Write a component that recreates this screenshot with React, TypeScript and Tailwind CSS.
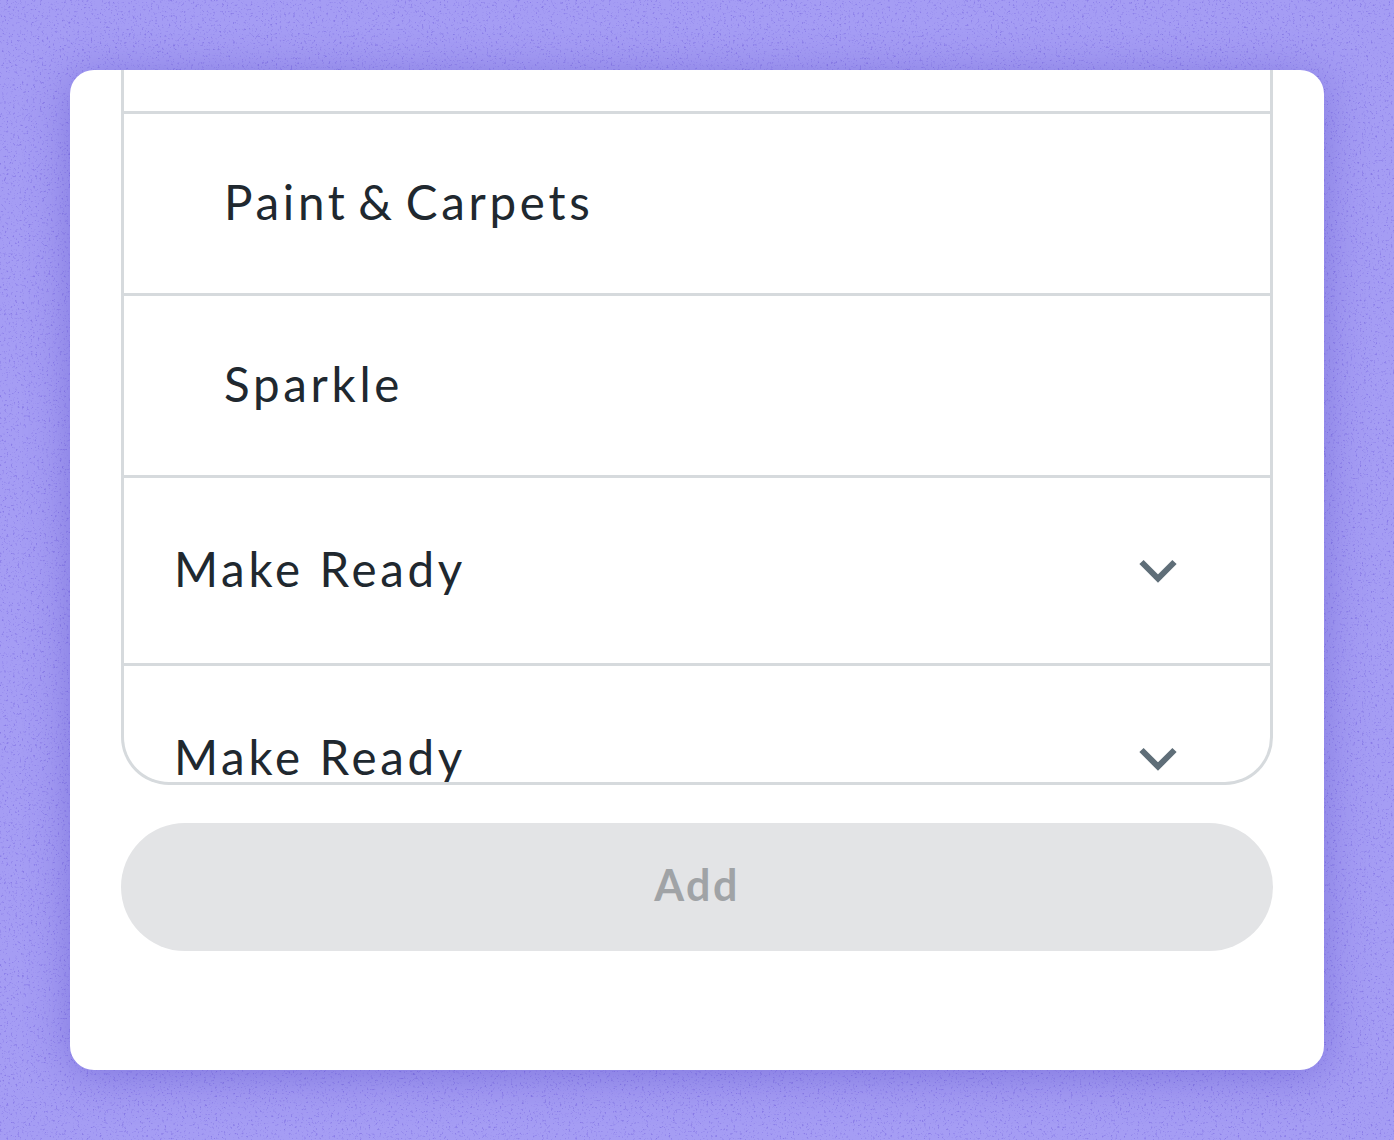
const font = "font-['Lato','Liberation_Sans',sans-serif]";

function Chevron() {
  return (
    <svg width="38" height="24" viewBox="0 0 38 24" fill="none" className="shrink-0">
      <path d="M2.5 3 L19 19.5 L35.5 3" stroke="#5f6e78" strokeWidth="6" />
    </svg>
  );
}

function Row({ label, child, last }: { label: string; child?: boolean; last?: boolean }) {
  return (
    <div
      className={`flex shrink-0 items-center justify-between border-b-[3px] border-[#d6dadd] pr-[93px] text-[47.5px] tracking-[0.078em] text-[#20282f] ${
        child ? "h-[182px] pl-[100px] [word-spacing:-6px]" : "h-[188px] pl-[50px]"
      } ${last ? "border-b-0" : ""}`}
    >
      <span className="mb-[4px]">{label}</span>
      {!child && <Chevron />}
    </div>
  );
}

export default function App() {
  return (
    <div className={`relative min-h-[1140px] overflow-hidden bg-[#a59df4] p-[70px] ${font}`}>
      <svg className="absolute inset-0 h-full w-full" aria-hidden="true">
        <filter id="grain">
          <feTurbulence type="fractalNoise" baseFrequency="0.45" numOctaves="4" seed="4" />
          <feColorMatrix values="0 0 0 0 0.25  0 0 0 0 0.2  0 0 0 0 0.8  4 0 0 0 -2.35" />
        </filter>
        <rect width="100%" height="100%" filter="url(#grain)" />
      </svg>

      <div className="relative flex h-[1000px] flex-col rounded-[24px] bg-white px-[51px] shadow-[0_6px_44px_rgba(70,58,190,0.38)]">
        <div className="flex h-[715px] flex-col overflow-hidden rounded-b-[48px] border-x-[3px] border-b-[3px] border-[#d6dadd]">
          <div className="h-[44px] shrink-0 border-b-[3px] border-[#d6dadd]" />
          <Row label="Paint & Carpets" child />
          <Row label="Sparkle" child />
          <Row label="Make Ready" />
          <Row label="Make Ready" last />
        </div>
        <button className="mt-[38px] flex h-[128px] items-center justify-center rounded-full bg-[#e3e4e6] pb-[4px] text-[43px] font-bold tracking-[0.055em] text-[#a0a3a6]">
          Add
        </button>
      </div>
    </div>
  );
}
